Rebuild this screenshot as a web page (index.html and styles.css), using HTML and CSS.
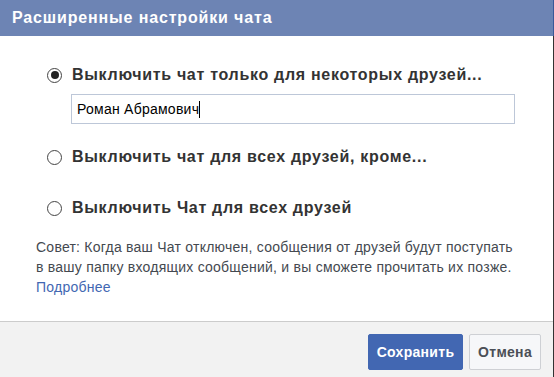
FILE: index.html
```html
<!DOCTYPE html>
<html lang="ru">
<head>
  <meta charset="UTF-8">
  <meta name="viewport" content="width=device-width, initial-scale=1.0">
  <title>Расширенные настройки чата</title>
  <link rel="stylesheet" href="styles.css">
</head>
<body>
  <div class="dialog">
    <div class="dialog-header">Расширенные настройки чата</div>

    <div class="dialog-body">
      <label class="option first">
        <span class="radio checked"></span>
        <span class="option-text">Выключить чат только для некоторых друзей...</span>
      </label>
      <div class="friends-input">Роман Абрамович<span class="caret"></span></div>

      <label class="option second">
        <span class="radio"></span>
        <span class="option-text">Выключить чат для всех друзей, кроме...</span>
      </label>

      <label class="option third">
        <span class="radio"></span>
        <span class="option-text">Выключить Чат для всех друзей</span>
      </label>

      <p class="tip">
        Совет: Когда ваш Чат отключен, сообщения от друзей будут поступать<br>
        в вашу папку входящих сообщений, и вы сможете прочитать их позже.<br>
        <a href="#">Подробнее</a>
      </p>
    </div>

    <div class="dialog-footer">
      <button class="btn btn-save">Сохранить</button>
      <button class="btn btn-cancel">Отмена</button>
    </div>
  </div>
</body>
</html>
```

FILE: styles.css
```css
body {
    margin: 0;
    padding: 0;
    font-family: "Liberation Sans", Arial, sans-serif;
    background-color: #ffffff;
}

.dialog {
    width: 553px;
    border-right: 1px solid #333;
    background-color: #fff;
    min-height: 100vh;
}

.dialog-header {
    height: 36px;
    line-height: 36px;
    padding-left: 12px;
    background-color: #6d84b4;
    border-right: 1px solid #3b5998;
    margin-right: -1px;
    color: #fff;
    font-size: 16px;
    font-weight: bold;
    letter-spacing: 0.85px;
}

.dialog-body {
    padding: 28px 12px 24px 36px;
}

.option {
    display: flex;
    align-items: center;
    height: 22px;
    padding-left: 11px;
    cursor: pointer;
}

.option.second {
    margin-top: 22px;
}

.option.third {
    margin-top: 29px;
}

.radio {
    box-sizing: border-box;
    width: 15px;
    height: 15px;
    border: 1px solid #444;
    border-radius: 50%;
    margin-right: 10px;
    display: flex;
    align-items: center;
    justify-content: center;
    background-color: #fff;
}

.radio.checked::after {
    content: "";
    width: 8px;
    height: 8px;
    border-radius: 50%;
    background-color: #222;
}

.option-text {
    font-size: 16px;
    font-weight: bold;
    color: #333;
    letter-spacing: 0.7px;
}

.friends-input {
    box-sizing: border-box;
    width: 444px;
    height: 30px;
    margin: 8px 0 0 35px;
    padding: 0 5px;
    border: 1px solid #bdc7d8;
    font-size: 14px;
    line-height: 28px;
    color: #000;
    letter-spacing: 0.25px;
}

.caret {
    display: inline-block;
    width: 1px;
    height: 17px;
    background-color: #000;
    vertical-align: -4px;
}

.tip {
    margin: 18px 0 0 0;
    font-size: 14px;
    line-height: 20px;
    color: #444950;
    letter-spacing: 0.24px;
    white-space: nowrap;
}

.tip a {
    color: #4267b2;
    text-decoration: none;
}

.dialog-footer {
    display: flex;
    justify-content: flex-end;
    gap: 6px;
    padding: 12px 12px 12px 0;
    border-top: 1px solid #ccc;
    background-color: #f2f2f2;
    min-height: 60px;
    box-sizing: border-box;
}

.btn {
    height: 36px;
    padding: 0;
    border-radius: 2px;
    font-family: "Liberation Sans", Arial, sans-serif;
    font-size: 14px;
    font-weight: bold;
    letter-spacing: 0.3px;
    cursor: pointer;
}

.btn-save {
    width: 95px;
    border: 1px solid #4267b2;
    background-color: #4267b2;
    color: #fff;
}

.btn-cancel {
    width: 72px;
    border: 1px solid #ced0d4;
    background-color: #f6f7f9;
    color: #4b4f56;
}
```
